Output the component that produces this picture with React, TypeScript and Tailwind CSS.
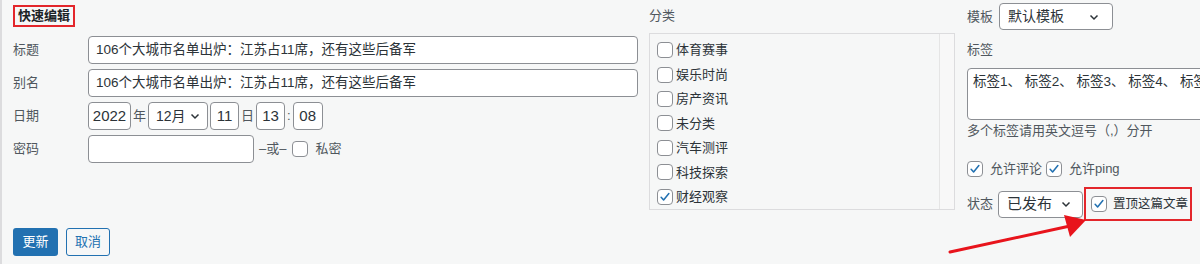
import React from 'react'

const font = "font-[family-name:'Liberation_Sans','Noto_Sans_CJK_SC',sans-serif]"

function Box({ checked = false }: { checked?: boolean }) {
  return (
    <span className="flex h-4 w-4 shrink-0 items-center justify-center rounded-[4px] border border-[#8c8f94] bg-white">
      {checked && (
        <svg width="14" height="14" viewBox="0 0 20 20">
          <path d="M4.5 10.5l3.5 3.8L15.5 5" fill="none" stroke="#2271b1" strokeWidth="2.2" strokeLinecap="round" strokeLinejoin="round" />
        </svg>
      )}
    </span>
  )
}

function Chevron() {
  return (
    <svg width="12" height="12" viewBox="0 0 12 12" className="shrink-0">
      <path d="M2.5 4.5L6 8l3.5-3.5" fill="none" stroke="#2c3338" strokeWidth="1.5" />
    </svg>
  )
}

function Select({ value, className }: { value: string; className: string }) {
  return (
    <div className={`flex shrink-0 items-center justify-between whitespace-nowrap rounded-[4px] border border-[#8c8f94] bg-white text-[14px] text-[#2c3338] ${className}`}>
      <span>{value}</span>
      <Chevron />
    </div>
  )
}

function Field({ value, className }: { value: string; className: string }) {
  return (
    <div className={`flex shrink-0 items-center whitespace-nowrap rounded-[4px] border border-[#8c8f94] bg-white text-[#2c3338] ${className}`}>
      {value}
    </div>
  )
}

function Row({ label, children }: { label: string; children: React.ReactNode }) {
  return (
    <div className="flex h-[28px] items-center">
      <span className="w-[75px] shrink-0 text-[13px] text-[#50575e]">{label}</span>
      {children}
    </div>
  )
}

const categories = ['体育赛事', '娱乐时尚', '房产资讯', '未分类', '汽车测评', '科技探索', '财经观察']

export default function App() {
  const title = '106个大城市名单出炉：江苏占11席，还有这些后备军'
  return (
    <div className={`relative h-[264px] w-[1200px] overflow-hidden border-l-2 border-[#dcdcde] bg-[#f6f7f7] ${font}`}>
      <div className="flex h-[228px] pl-[11px]">
        {/* left column */}
        <div className="flex w-[625px] shrink-0 flex-col">
          <div className="mt-[5px] flex h-[22px] w-[62px] items-center justify-center border-2 border-[#e3262b] text-[13px] font-semibold text-[#1d2327]">
            快速编辑
          </div>
          <div className="mt-[9px] flex flex-col gap-[5px]">
            <Row label="标题">
              <Field value={title} className="h-[28px] flex-1 px-[7px] text-[13.5px]" />
            </Row>
            <Row label="别名">
              <Field value={title} className="h-[28px] flex-1 px-[7px] text-[13.5px]" />
            </Row>
            <Row label="日期">
              <Field value="2022" className="h-[28px] w-[43px] justify-center text-[15px]" />
              <span className="mx-[2px] text-[13px] text-[#50575e]">年</span>
              <Select value="12月" className="h-[28px] w-[60px] pl-[7px] pr-[6px]" />
              <Field value="11" className="ml-[2px] h-[28px] w-[29px] justify-center text-[15px]" />
              <span className="mx-[2px] text-[13px] text-[#50575e]">日</span>
              <Field value="13" className="h-[28px] w-[29px] justify-center text-[15px]" />
              <span className="mx-[2px] text-[13px] text-[#50575e]">:</span>
              <Field value="08" className="h-[28px] w-[30px] justify-center text-[15px]" />
            </Row>
            <Row label="密码">
              <Field value="" className="h-[28px] w-[166px]" />
              <span className="ml-[5px] text-[13px] text-[#50575e]">–或–</span>
              <span className="ml-[6px]"><Box /></span>
              <span className="ml-[7px] text-[13px] text-[#50575e]">私密</span>
            </Row>
          </div>
        </div>

        {/* middle column */}
        <div className="ml-[11px] flex w-[306px] shrink-0 flex-col">
          <div className="mt-[6px] h-[20px] text-[13px] leading-[20px] text-[#50575e]">分类</div>
          <div className="mt-[7px] flex h-[177px] border border-[#dcdcde]">
            <div className="flex flex-1 flex-col pl-[7px] pt-[4px]">
              {categories.map((c, i) => (
                <div key={c} className="flex h-[24.5px] items-center gap-[3px]">
                  <Box checked={i === categories.length - 1} />
                  <span className="text-[13px] text-[#2c3338]">{c}</span>
                </div>
              ))}
            </div>
            <div className="w-[15px] border-l border-[#e5e5e5] bg-[#f8f8f8]" />
          </div>
        </div>

        {/* right column */}
        <div className="ml-[12px] flex w-[280px] shrink-0 flex-col">
          <div className="mt-[3px] flex h-[27px] items-center">
            <span className="w-[32px] shrink-0 text-[13px] text-[#50575e]">模板</span>
            <Select value="默认模板" className="h-[27px] w-[114px] pl-[8px] pr-[12px]" />
          </div>
          <div className="mt-[10px] h-[20px] text-[13px] leading-[20px] text-[#50575e]">标签</div>
          <div className="mt-[8px] h-[52px] w-[260px] whitespace-nowrap rounded-[4px] border border-[#8c8f94] bg-white px-[5px] pt-[3px] text-[13.5px] text-[#2c3338]">
            标签1、 标签2、 标签3、 标签4、 标签5、
          </div>
          <div className="mt-[3px] h-[16px] whitespace-nowrap text-[13px] leading-[16px] text-[#50575e]">多个标签请用英文逗号（,）分开</div>
          <div className="mt-[20px] flex h-[20px] items-center whitespace-nowrap">
            <Box checked />
            <span className="ml-[7px] text-[13px] text-[#50575e]">允许评论</span>
            <span className="ml-[4px]"><Box checked /></span>
            <span className="ml-[7px] text-[13px] text-[#50575e]">允许ping</span>
          </div>
          <div className="mt-[8px] flex h-[34px] items-center">
            <span className="w-[31px] shrink-0 text-[13px] text-[#50575e]">状态</span>
            <Select value="已发布" className="h-[27px] w-[85px] pl-[8px] pr-[10px] text-[15px]" />
            <div className="ml-[1px] flex h-[34px] w-[108px] shrink-0 items-center whitespace-nowrap border-2 border-[#e3262b] pl-[5px]">
              <Box checked />
              <span className="ml-[6px] text-[12.5px] text-[#2c3338]">置顶这篇文章</span>
            </div>
          </div>
        </div>
      </div>

      {/* buttons */}
      <div className="flex gap-[8px] pl-[11px]">
        <button className="flex h-[28px] w-[45px] items-center justify-center rounded-[3px] bg-[#2271b1] text-[13px] text-white">
          更新
        </button>
        <button className="flex h-[28px] w-[44px] items-center justify-center rounded-[3px] border border-[#2271b1] bg-[#f6f7f7] text-[13px] text-[#2271b1]">
          取消
        </button>
      </div>

      {/* red annotation arrow */}
      <svg className="pointer-events-none absolute left-0 top-0" width="1200" height="264">
        <line x1="948" y1="252" x2="1068" y2="226" stroke="#e8141c" strokeWidth="3" strokeLinecap="round" />
        <polygon points="1084,220 1062,215 1068,237" fill="#e8141c" />
      </svg>
    </div>
  )
}
